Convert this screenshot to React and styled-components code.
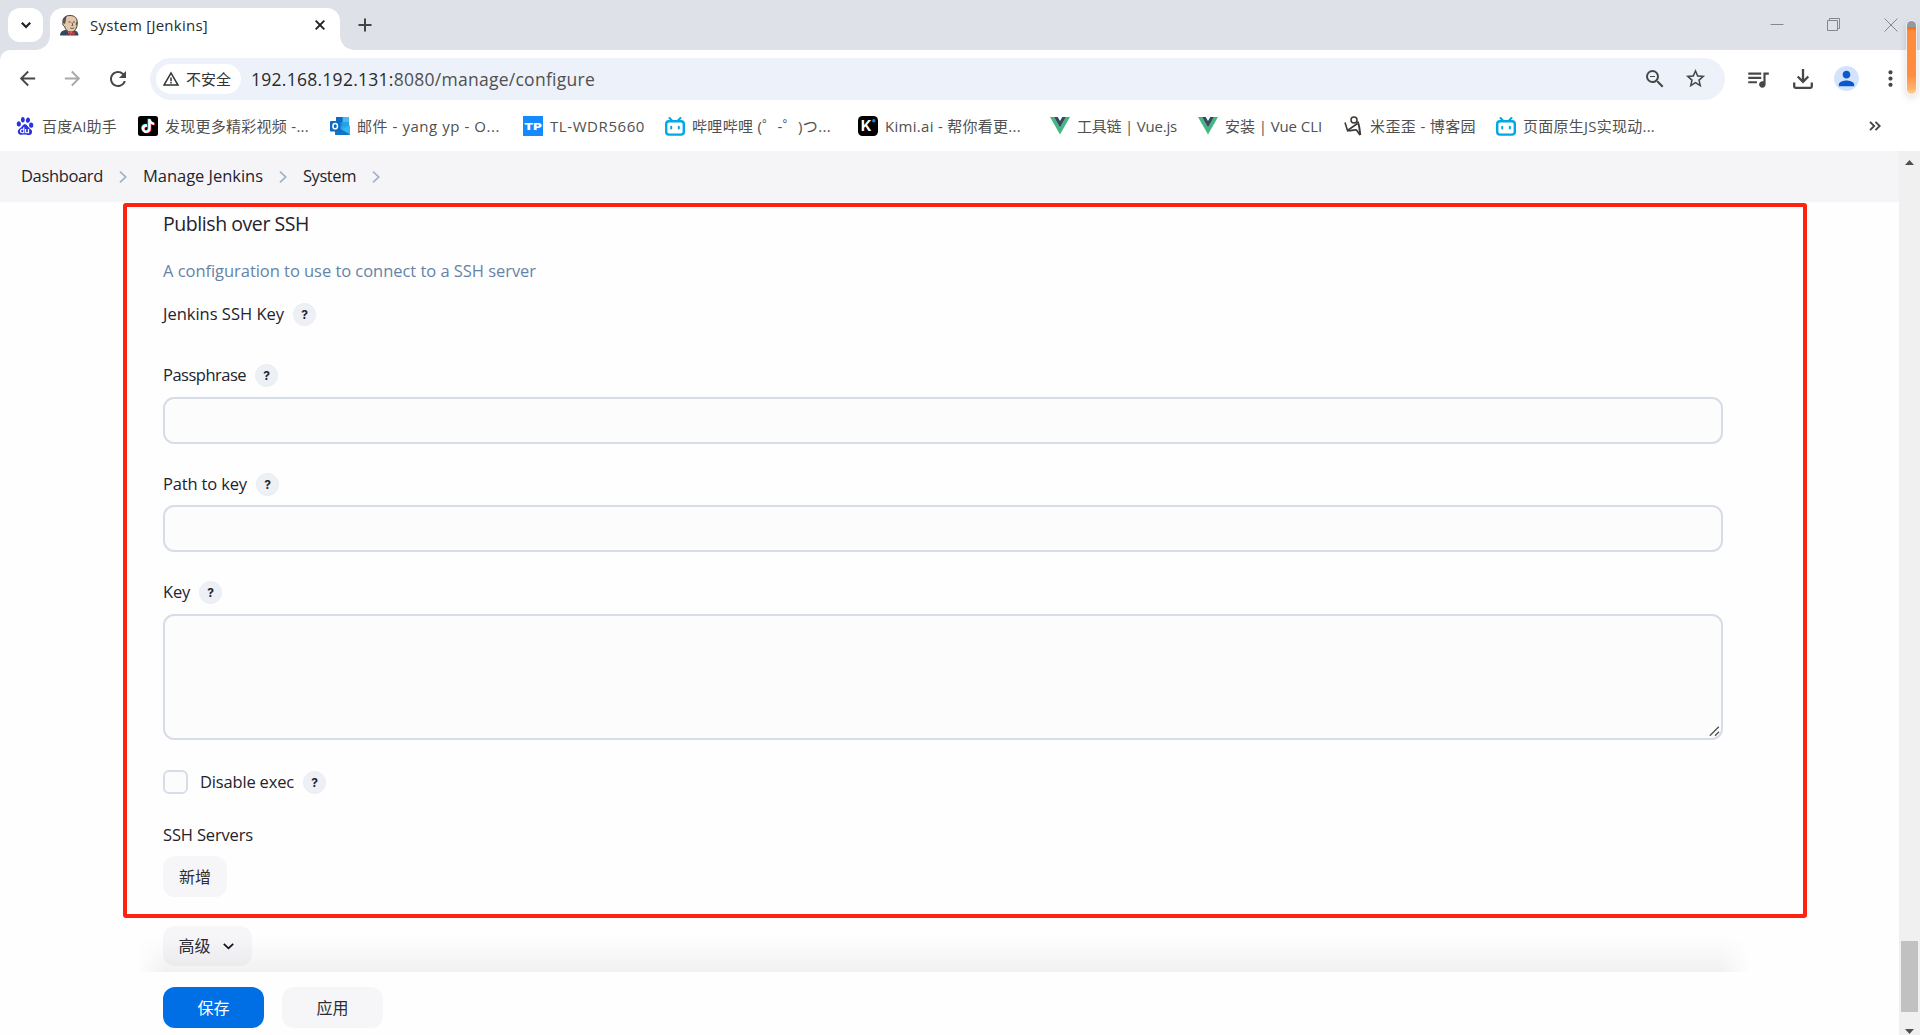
import React, { useLayoutEffect, useRef, useState } from 'react';
import styled, { createGlobalStyle } from 'styled-components';
import {
  MdArrowBack,
  MdArrowForward,
  MdMoreVert,
  MdPerson,
  MdQueueMusic,
  MdRefresh,
  MdStarBorder,
  MdWarningAmber,
  MdZoomOut,
} from 'react-icons/md';
import { SiBaidu, SiTiktok } from 'react-icons/si';

const GlobalStyle = createGlobalStyle`
  * {
    box-sizing: border-box;
  }
  body {
    margin: 0;
    overflow: hidden;
    background: #fff;
    font-family: 'Open Sans', 'Noto Sans CJK SC', sans-serif;
  }
`;

const Window = styled.div`
  position: relative;
  display: flex;
  flex-direction: column;
  width: 1920px;
  height: 1035px;
  overflow: hidden;
  color: #23232d;
`;

const Measured = styled.span`
  display: inline-block;
  flex: none;
  white-space: pre;
`;

const TabStrip = styled.div`
  display: flex;
  flex: none;
  align-items: flex-start;
  height: 50px;
  padding: 8px 22px 0 8px;
  background: #dee1e8;
`;

const TabSearch = styled.div`
  display: flex;
  align-items: center;
  justify-content: center;
  width: 35px;
  height: 34px;
  border-radius: 12px;
  background: #fff;
`;

const Tab = styled.div`
  position: relative;
  display: flex;
  align-items: center;
  width: 290px;
  height: 42px;
  margin-left: 7px;
  padding: 0 15px 8px 10px;
  border-radius: 13px 13px 0 0;
  background: #fff;
  font-size: 15px;
  color: #2a2a2a;
  &::before,
  &::after {
    content: '';
    position: absolute;
    bottom: 0;
    width: 14px;
    height: 14px;
  }
  &::before {
    left: -14px;
    background: radial-gradient(circle at 0 0, transparent 13.5px, #fff 14px);
  }
  &::after {
    right: -14px;
    background: radial-gradient(circle at 100% 0, transparent 13.5px, #fff 14px);
  }
`;

const TabTitle = styled.div`
  flex: 1;
  margin-left: 11px;
  line-height: 20px;
`;

const NewTab = styled.svg`
  margin: 10px 0 0 18px;
`;

const WindowControls = styled.div`
  display: flex;
  gap: 43px;
  margin: 10px 0 0 auto;
`;

const Toolbar = styled.div`
  display: flex;
  flex: none;
  align-items: center;
  height: 58px;
  padding: 0 15px 0 16px;
  border-radius: 10px 0 0 0;
  background: #fff;
  color: #474747;
`;

const ToolbarBack = styled.div`
  flex: none;
  background: #dee1e8;
`;

const Nav = styled.div`
  display: flex;
  flex: none;
  gap: 22px;
  width: 134px;
  svg:nth-child(2) {
    color: #a9a9a9;
  }
`;

const Omnibox = styled.div`
  display: flex;
  flex: none;
  align-items: center;
  width: 1575px;
  height: 42px;
  padding: 0 18px 0 6px;
  border-radius: 21px;
  background: #ecf1fa;
`;

const SecurityChip = styled.div`
  display: flex;
  align-items: center;
  gap: 6px;
  width: 85px;
  height: 30px;
  padding-left: 6px;
  border-radius: 15px;
  background: #fff;
  font-size: 15px;
  line-height: 20px;
  color: #333;
`;

const Url = styled.div`
  flex: 1;
  margin-left: 10px;
  font-size: 17.5px;
  line-height: 24px;
  color: #505050;
  b {
    font-weight: inherit;
    color: #2a2a2a;
  }
`;

const OmniboxActions = styled.div`
  display: flex;
  gap: 17px;
`;

const Actions = styled.div`
  display: flex;
  align-items: center;
  margin-left: 20px;
  margin-top: -1px;
  svg {
    flex: none;
  }
`;

const Avatar = styled.div`
  display: flex;
  flex: none;
  align-items: center;
  justify-content: center;
  width: 25px;
  height: 25px;
  margin: 0 19px 0 21px;
  border-radius: 50%;
  background: #d3e3fd;
  color: #0b57d0;
`;

const BookmarkBar = styled.div`
  display: flex;
  flex: none;
  align-items: center;
  height: 43px;
  padding: 0 39px 7px 15px;
  background: #fff;
`;

const Bookmark = styled.div`
  display: flex;
  flex: none;
  align-items: center;
  gap: 7px;
  width: ${props => props.$width}px;
  font-size: 15px;
  line-height: 20px;
  color: #505050;
  svg {
    flex: none;
  }
`;

const BookmarkIcon = styled.span`
  display: flex;
  flex: none;
  justify-content: center;
  min-width: 20px;
`;

const Overflow = styled.svg`
  margin-left: auto;
`;

const Viewport = styled.div`
  display: flex;
  flex: 1;
  min-height: 0;
`;

const Page = styled.div`
  display: flex;
  flex: 1;
  flex-direction: column;
  min-width: 0;
  background: #fefefe;
`;

const Breadcrumbs = styled.div`
  display: flex;
  flex: none;
  align-items: center;
  gap: 16px;
  height: 51px;
  padding: 0 21px;
  background: #f5f5f8;
  font-size: 16.5px;
  line-height: 24px;
  span {
    margin-bottom: 2px;
  }
`;

const Form = styled.div`
  display: flex;
  flex: 1;
  flex-direction: column;
  align-items: flex-start;
  min-height: 0;
  padding: 9px 176px 0 163px;
  font-size: 16.5px;
`;

const SectionTitle = styled.div`
  font-size: 19.5px;
  line-height: 26px;
`;

const Description = styled.div`
  margin-top: 22px;
  line-height: 24px;
  color: #6583a9;
`;

const Label = styled.div`
  display: flex;
  align-items: center;
  gap: 9px;
  height: 24px;
  margin-top: ${props => props.$top}px;
  line-height: 24px;
`;

const Help = styled.span`
  display: flex;
  flex: none;
  align-items: center;
  justify-content: center;
  width: 23px;
  height: 23px;
  margin-top: 1px;
  border: 1px solid #e9edf2;
  border-radius: 50%;
  background: #edf1f5;
  font: 700 12px/20px Inter, sans-serif;
`;

const TextInput = styled.input`
  flex: none;
  width: 1560px;
  height: 47px;
  margin: ${props => props.$top}px 0 0;
  border: 2px solid #d6dde9;
  border-radius: 11px;
  background: #fcfcfd;
`;

const KeyArea = styled.div`
  display: flex;
  flex: none;
  align-items: flex-end;
  justify-content: flex-end;
  width: 1560px;
  height: 126px;
  margin-top: 10px;
  padding: 0 1px 1px 0;
  border: 2px solid #d6dde9;
  border-radius: 11px;
  background: #fcfcfd;
`;

const Checkbox = styled.span`
  width: 25px;
  height: 24px;
  margin-right: 3px;
  border: 2px solid #d6dde9;
  border-radius: 6px;
  background: #fcfcfd;
`;

const Button = styled.div`
  display: flex;
  flex: none;
  align-items: center;
  justify-content: center;
  gap: 12px;
  width: ${props => props.$width}px;
  height: ${props => props.$height || 41}px;
  margin-top: ${props => props.$top || 0}px;
  border-radius: 12px;
  background: ${props => (props.$primary ? '#006fe6' : '#f6f6f9')};
  color: ${props => (props.$primary ? '#fff' : '#2c2c36')};
  font-size: 16px;
  line-height: 24px;
`;

const AdvancedButton = styled(Button)`
  padding-right: 3px;
`;

const BottomBar = styled.div`
  position: relative;
  display: flex;
  flex: none;
  gap: 18px;
  height: 63px;
  padding: 15px 163px 0;
  background: #fefefe;
  &::before {
    content: '';
    position: absolute;
    left: 137px;
    right: 150px;
    top: -36px;
    height: 36px;
    background: linear-gradient(rgba(0, 0, 0, 0), rgba(0, 0, 0, 0.05));
    mask-image: linear-gradient(
      90deg,
      transparent,
      #000 28px,
      #000 calc(100% - 28px),
      transparent
    );
  }
`;

const Scrollbar = styled.div`
  display: flex;
  flex-direction: column;
  align-items: center;
  width: 21px;
  padding: 9px 0 1px;
  background: #f0f0f0;
`;

const Thumb = styled.div`
  width: 17px;
  height: 71px;
  margin: auto 0 17px;
  background: #c1c1c1;
`;

const RedFrame = styled.div`
  position: absolute;
  left: 123px;
  top: 203px;
  width: 1684px;
  height: 715px;
  border: 4px solid #ff2112;
  border-radius: 3px;
`;

const FloatingGauge = styled.div`
  position: absolute;
  left: 1907px;
  top: 21px;
  width: 9px;
  height: 73px;
  border-radius: 5px;
  background: linear-gradient(
    #9299a3 0,
    #9299a3 6px,
    #ec6d16 7px,
    #ff8a3a 10px,
    #ff8d40 54px,
    #ffb56b 68px,
    #ffd09a 73px
  );
  box-shadow: 0 0 0 1px rgba(255, 255, 255, 0.6), 0 3px 9px rgba(0, 0, 0, 0.18);
`;

// Spreads the letters so the text takes exactly `width` pixels.
const FitText = ({ width, children }) => {
  const ref = useRef(null);
  const [spacing, setSpacing] = useState(0);
  useLayoutEffect(() => {
    const count = ref.current.textContent.length;
    setSpacing((width - ref.current.getBoundingClientRect().width) / count);
  }, [width]);
  return (
    <Measured ref={ref} style={{ letterSpacing: `${spacing}px` }}>
      {children}
    </Measured>
  );
};

const JenkinsIcon = () => (
  <svg width="19" height="21" viewBox="0 0 19 21">
    <path d="M0 20.5c0-3 1.8-5 5-5.5h8.500c3.500.5 5 2.500 5 5.500z" fill="#2f4a5f" />
    <path d="M7 15l3 5.500 3.500-5.500z" fill="#f4f4f4" />
    <path
      d="M3 7.500C2.500 3 5.500.5 10 .5c5 0 7.500 3 7.300 7.500-.1 5-2.300 9-6.600 9-3.200 0-5.500-2.500-6-5.500C3.200 11 2.200 9 3 7.500z"
      fill="#e3c8aa"
      stroke="#4a3d39"
      strokeWidth="1"
    />
    <path d="M3 8c-.8-3 .3-6 3.500-7.200L6 5 5 9z" fill="#5b5350" />
    <path d="M17.200 6l-.4 5-1.300-2z" fill="#5b5350" />
    <path d="M8.500 7h2M13 7h2M10.200 13c1.500.7 3 .5 4-.3M12 7.500l.8 3h-1.300" stroke="#54423c" strokeWidth=".9" fill="none" />
    <path d="M8.500 16.500l3 1.300 3-1.300v4l-3-1.300-3 1.300z" fill="#e0312c" />
  </svg>
);

const TiktokIcon = () => (
  <svg width="20" height="20" viewBox="0 0 20 20">
    <rect width="20" height="20" rx="2.500" fill="#000" />
    <SiTiktok x="2.300" y="2.500" size={14} color="#25f4ee" />
    <SiTiktok x="3.700" y="3.500" size={14} color="#fe2c55" />
    <SiTiktok x="3" y="3" size={14} color="#fff" />
  </svg>
);

const OutlookIcon = () => (
  <svg width="20" height="18" viewBox="0 0 20 18">
    <path d="M6 0h13v10H6z" fill="#1490df" />
    <path d="M12.500 0H19v5h-6.500z" fill="#50b8f0" />
    <path d="M6 0h6.500v5H6z" fill="#0f6cbd" />
    <path d="M12.500 5H19v5h-6.500z" fill="#28a0e6" />
    <path d="M5 10l15-1.500V17a1 1 0 0 1-1 1H6a1 1 0 0 1-1-1z" fill="#28a8ea" />
    <path d="M5 9l15 8.500-1 .5H6a1 1 0 0 1-1-1z" fill="#1373c4" />
    <path d="M20 8.500V17l-8-4.500z" fill="#35b8f1" />
    <rect y="4" width="10.500" height="10.500" rx="1" fill="#0c6cc4" />
    <ellipse cx="5.200" cy="9.200" rx="2.300" ry="2.600" fill="none" stroke="#fff" strokeWidth="1.500" />
  </svg>
);

const TpIcon = () => (
  <svg width="20" height="20" viewBox="0 0 20 20">
    <rect width="20" height="20" fill="#148aff" />
    <text
      x="1.300"
      y="13.700"
      fill="#fff"
      fontFamily="Inter, sans-serif"
      fontSize="9.500"
      fontWeight="900"
      textLength="17.500"
      lengthAdjust="spacingAndGlyphs"
    >
      TP
    </text>
  </svg>
);

const BilibiliIcon = () => (
  <svg width="20" height="19" viewBox="0 0 20 19" fill="none" stroke="#00a8e4" strokeLinecap="round">
    <path d="M4.500 1l3 3M15.500 1l-3 3" strokeWidth="2" />
    <rect x="1.200" y="4.200" width="17.600" height="13.400" rx="2.800" strokeWidth="2.400" />
    <path d="M6.200 9.800v1.800M13.800 9.800v1.800" strokeWidth="2" />
  </svg>
);

const KimiIcon = () => (
  <svg width="20" height="20" viewBox="0 0 20 20">
    <rect width="20" height="20" rx="4.500" fill="#000" />
    <text x="2.700" y="15.300" fill="#fff" fontFamily="Inter, sans-serif" fontSize="15" fontWeight="700">
      K
    </text>
    <circle cx="15.800" cy="4.800" r="1.700" fill="#1783ff" />
  </svg>
);

const VueIcon = () => (
  <svg width="20" height="18" viewBox="0 0 20 18">
    <path d="M0 0h4l6 10.500L16 0h4L10 17.500z" fill="#41b883" />
    <path d="M4 0h3.700L10 4l2.300-4H16l-6 10.500z" fill="#35495e" />
  </svg>
);

const FigureIcon = () => (
  <svg width="18" height="20" viewBox="0 0 18 20" fill="none" stroke="#3c3836">
    <circle cx="10" cy="4" r="3" strokeWidth="1.500" />
    <path d="M1 6.500l2.500 8L13.500 7.500" strokeWidth="1.600" />
    <path d="M13.500 5.500c2 3.500 2 8 2.800 13.500" strokeWidth="1.900" />
    <path d="M3.500 14.500c3 .8 5.500-1 9-.5l3.500 5" strokeWidth="1.700" />
  </svg>
);

const Chevron = () => (
  <svg width="8" height="12" viewBox="0 0 8 12" fill="none" stroke="#9fb0c9" strokeWidth="1.700">
    <path d="M1 .7L6.700 6 1 11.300" />
  </svg>
);

const bookmarks = [
  { icon: <SiBaidu size={18} color="#2932e1" />, text: '百度AI助手', textWidth: 75, width: 123 },
  { icon: <TiktokIcon />, text: '发现更多精彩视频 -...', textWidth: 144, width: 192 },
  { icon: <OutlookIcon />, text: '邮件 - yang yp - O...', textWidth: 143, width: 193 },
  { icon: <TpIcon />, text: 'TL-WDR5660', textWidth: 95, width: 142 },
  { icon: <BilibiliIcon />, text: '哔哩哔哩 (゜-゜)つ...', textWidth: 139, width: 193 },
  { icon: <KimiIcon />, text: 'Kimi.ai - 帮你看更...', textWidth: 136, width: 192 },
  { icon: <VueIcon />, text: '工具链 | Vue.js', textWidth: 100, width: 148 },
  { icon: <VueIcon />, text: '安装 | Vue CLI', textWidth: 97, width: 145 },
  { icon: <FigureIcon />, text: '米歪歪 - 博客园', textWidth: 106, width: 153 },
  { icon: <BilibiliIcon />, text: '页面原生JS实现动...', textWidth: 132, width: 160 },
];

const crumbs = [
  { text: 'Dashboard', width: 82 },
  { text: 'Manage Jenkins', width: 120 },
  { text: 'System', width: 53 },
];

const App = () => (
  <Window>
    <GlobalStyle />
    <TabStrip>
      <TabSearch>
        <svg width="10" height="7" viewBox="0 0 10 7" fill="none" stroke="#1f1f1f" strokeWidth="2.200">
          <path d="M.8.8L5 5 9.200.8" />
        </svg>
      </TabSearch>
      <Tab>
        <JenkinsIcon />
        <TabTitle>
          <FitText width={118}>System [Jenkins]</FitText>
        </TabTitle>
        <svg width="10" height="10" viewBox="0 0 10 10" stroke="#1f1f1f" strokeWidth="1.900">
          <path d="M.7.7l8.600 8.600M9.300.7L.7 9.300" />
        </svg>
      </Tab>
      <NewTab width="14" height="14" viewBox="0 0 14 14" stroke="#444" strokeWidth="2">
        <path d="M7 .5v13M.5 7h13" />
      </NewTab>
      <WindowControls>
        <svg width="14" height="14" viewBox="0 0 14 14" stroke="#858789">
          <path d="M.5 6.500h13" />
        </svg>
        <svg width="14" height="14" viewBox="0 0 14 14" fill="none" stroke="#858789">
          <path d="M.5 2.500h10v10H.5zM2.500 2.500v-2h10v10h-2" />
        </svg>
        <svg width="14" height="14" viewBox="0 0 14 14" stroke="#858789">
          <path d="M.5.5l13 13M13.500.5l-13 13" />
        </svg>
      </WindowControls>
    </TabStrip>
    <ToolbarBack>
      <Toolbar>
        <Nav>
          <MdArrowBack size={23} />
          <MdArrowForward size={23} />
          <MdRefresh size={24} />
        </Nav>
        <Omnibox>
          <SecurityChip>
            <MdWarningAmber size={18} />
            <FitText width={45}>不安全</FitText>
          </SecurityChip>
          <Url>
            <FitText width={344}>
              <b>192.168.192.131:</b>8080/manage/configure
            </FitText>
          </Url>
          <OmniboxActions>
            <MdZoomOut size={24} />
            <MdStarBorder size={23} />
          </OmniboxActions>
        </Omnibox>
        <Actions>
          <MdQueueMusic size={26} />
          <svg width="42" height="20" viewBox="-22 0 42 20" fill="none" stroke="#474747" strokeWidth="2.300">
            <path d="M10 0v12M4.700 7.500L10 12.800l5.300-5.300M1.200 13.500v4a1.300 1.300 0 0 0 1.300 1.300h15a1.300 1.300 0 0 0 1.300-1.300v-4" />
          </svg>
          <Avatar>
            <MdPerson size={23} />
          </Avatar>
          <MdMoreVert size={25} />
        </Actions>
      </Toolbar>
    </ToolbarBack>
    <BookmarkBar>
      {bookmarks.map(({ icon, text, textWidth, width }) => (
        <Bookmark key={text} $width={width}>
          <BookmarkIcon>{icon}</BookmarkIcon>
          <FitText width={textWidth}>{text}</FitText>
        </Bookmark>
      ))}
      <Overflow width="12" height="10" viewBox="0 0 12 10" fill="none" stroke="#474747" strokeWidth="1.900">
        <path d="M1 .8L5.200 5 1 9.200M6.500.8L10.700 5 6.500 9.200" />
      </Overflow>
    </BookmarkBar>
    <Viewport>
      <Page>
        <Breadcrumbs>
          {crumbs.map(({ text, width }) => (
            <React.Fragment key={text}>
              <FitText width={width}>{text}</FitText>
              <Chevron />
            </React.Fragment>
          ))}
        </Breadcrumbs>
        <Form>
          <SectionTitle>
            <FitText width={146}>Publish over SSH</FitText>
          </SectionTitle>
          <Description>
            <FitText width={373}>A configuration to use to connect to a SSH server</FitText>
          </Description>
          <Label $top={19}>
            <FitText width={121}>Jenkins SSH Key</FitText>
            <Help>?</Help>
          </Label>
          <Label $top={37}>
            <FitText width={83}>Passphrase</FitText>
            <Help>?</Help>
          </Label>
          <TextInput $top={10} />
          <Label $top={28}>
            <FitText width={84}>Path to key</FitText>
            <Help>?</Help>
          </Label>
          <TextInput $top={9} />
          <Label $top={28}>
            <FitText width={27}>Key</FitText>
            <Help>?</Help>
          </Label>
          <KeyArea>
            <svg width="11" height="11" viewBox="0 0 11 11" stroke="#555" strokeWidth="1.400">
              <path d="M.8 9.800l9-9M6 9.800l4-4" />
            </svg>
          </KeyArea>
          <Label $top={30}>
            <Checkbox />
            <FitText width={94}>Disable exec</FitText>
            <Help>?</Help>
          </Label>
          <Label $top={29}>
            <FitText width={90}>SSH Servers</FitText>
          </Label>
          <Button $width={64} $top={9}>新增</Button>
          <AdvancedButton $width={89} $height={40} $top={29}>
            高级
            <svg width="11" height="7" viewBox="0 0 11 7" fill="none" stroke="#14141f" strokeWidth="1.800">
              <path d="M.8.8l4.700 4.500L10.200.8" />
            </svg>
          </AdvancedButton>
        </Form>
        <BottomBar>
          <Button $width={101} $primary>保存</Button>
          <Button $width={101}>应用</Button>
        </BottomBar>
      </Page>
      <Scrollbar>
        <svg width="9" height="5" viewBox="0 0 9 5">
          <path d="M4.500 0L9 5H0z" fill="#505050" />
        </svg>
        <Thumb />
        <svg width="9" height="5" viewBox="0 0 9 5">
          <path d="M0 0h9L4.500 5z" fill="#505050" />
        </svg>
      </Scrollbar>
    </Viewport>
    <RedFrame />
    <FloatingGauge />
  </Window>
);

export default App;
